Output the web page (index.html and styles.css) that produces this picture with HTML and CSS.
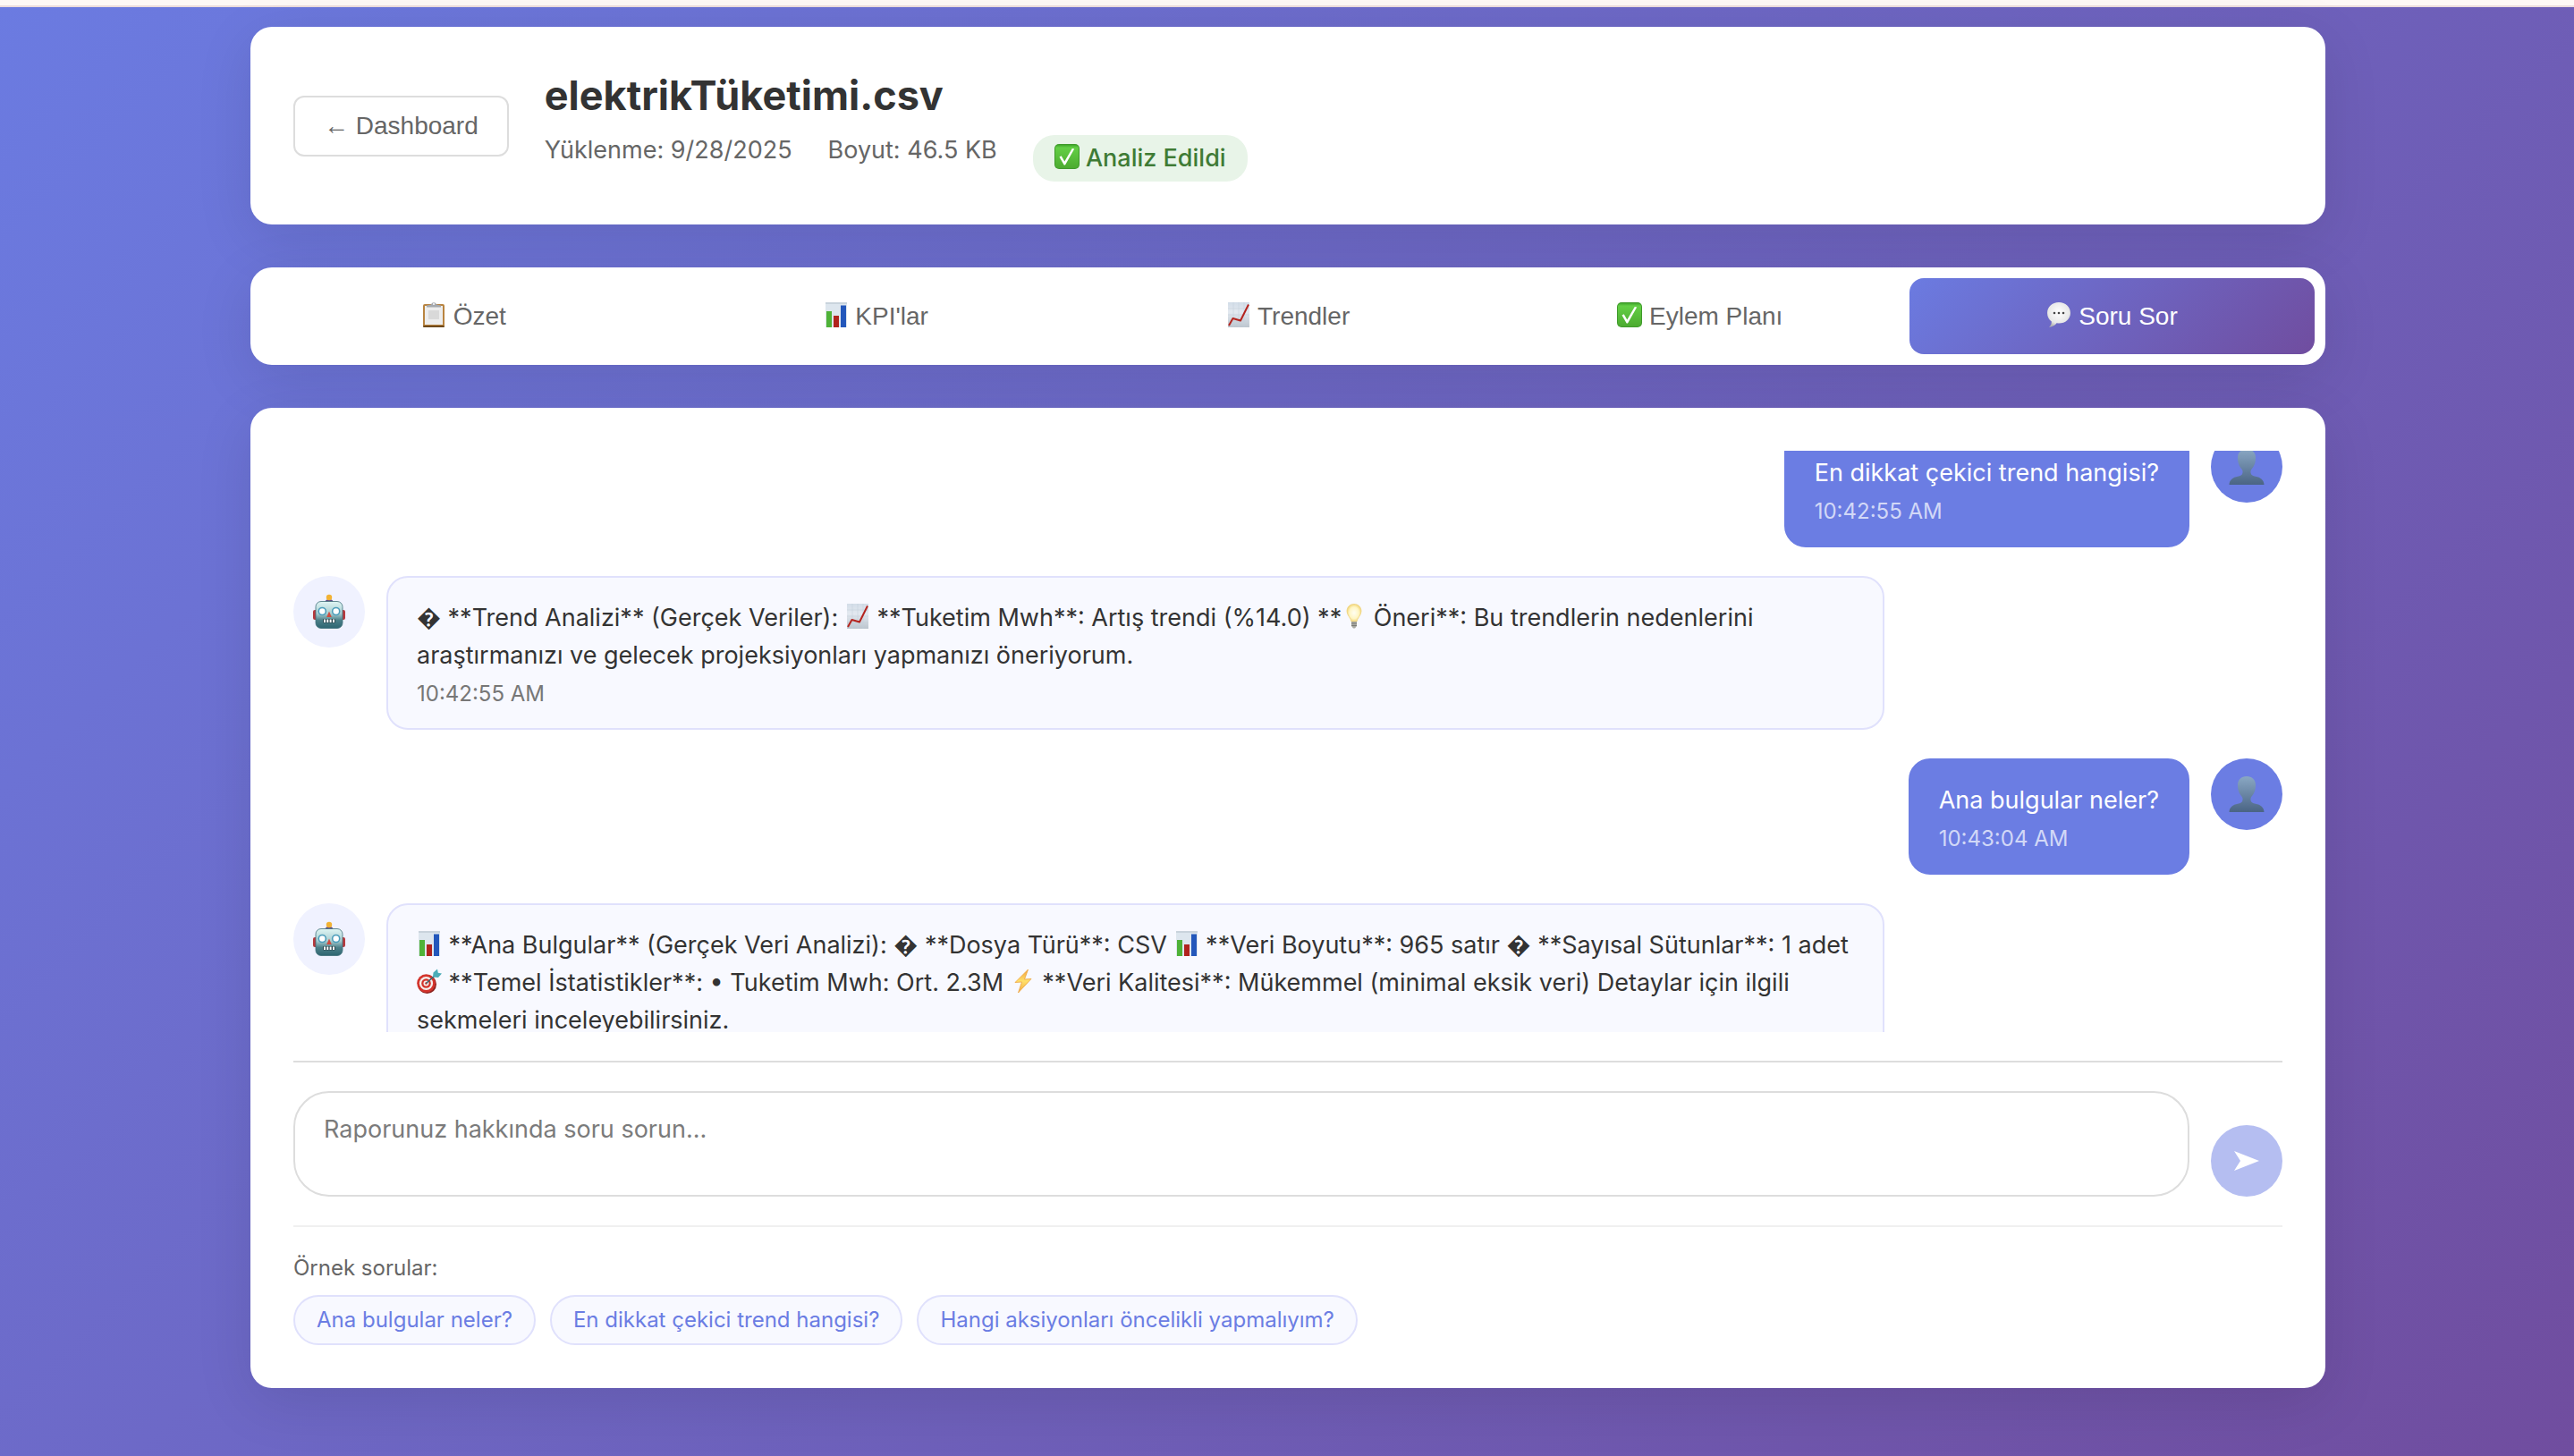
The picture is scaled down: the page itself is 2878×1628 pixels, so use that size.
FILE: index.html
```html
<!DOCTYPE html>
<html lang="tr">
<head>
<meta charset="utf-8">
<title>elektrikTüketimi.csv</title>
<link rel="stylesheet" href="styles.css">
</head>
<body>
<svg class="sprite" aria-hidden="true">
  <defs>
    <linearGradient id="g-green" x1="0" y1="0" x2="0" y2="1"><stop offset="0" stop-color="#3fa62b"/><stop offset=".12" stop-color="#63cf45"/><stop offset="1" stop-color="#4cab30"/></linearGradient>
    <linearGradient id="g-paper" x1="0" y1="0" x2="0" y2="1"><stop offset="0" stop-color="#d3dde8"/><stop offset=".4" stop-color="#e3e9f0"/><stop offset="1" stop-color="#bcc5ce"/></linearGradient>
    <linearGradient id="g-person" x1="0" y1="0" x2="0" y2="1"><stop offset="0" stop-color="#8aa8c4"/><stop offset="1" stop-color="#4a6484"/></linearGradient>
    <linearGradient id="g-robot" x1="0" y1="0" x2="0" y2="1"><stop offset="0" stop-color="#dff5f4"/><stop offset=".45" stop-color="#a9cfd2"/><stop offset=".7" stop-color="#4c8089"/><stop offset="1" stop-color="#2d6570"/></linearGradient>
    <linearGradient id="g-bolt" x1="0" y1="0" x2="0" y2="1"><stop offset="0" stop-color="#f0a13a"/><stop offset=".5" stop-color="#ffe16b"/><stop offset="1" stop-color="#f2a640"/></linearGradient>
    <radialGradient id="g-bubble" cx=".5" cy=".4" r=".6"><stop offset="0" stop-color="#fff"/><stop offset=".75" stop-color="#e8e8e8"/><stop offset="1" stop-color="#b5b5b5"/></radialGradient>
    <radialGradient id="g-bulb" cx=".5" cy=".5" r=".55"><stop offset="0" stop-color="#fffef2"/><stop offset=".6" stop-color="#fff6c4"/><stop offset="1" stop-color="#f0cf68"/></radialGradient>
  </defs>
  <symbol id="i-check" viewBox="0 0 28 28">
    <rect width="28" height="28" rx="5" fill="#3f9a2b"/><rect x="1" y="1" width="26" height="26" rx="4" fill="url(#g-green)"/>
    <path d="M5.500 14.500l2.200-1.200 3.600 6.200L19.800 5l2.400.4L12 23.500h-1.300z" fill="#fff"/>
  </symbol>
  <symbol id="i-trend" viewBox="0 0 28 28">
    <rect x="2" width="24" height="28" fill="url(#g-paper)"/><path d="M2 7h24M2 14h24M2 21h24M8 0v28M14 0v28M20 0v28" stroke="#c3ced9" stroke-width=".5"/>
    <path d="M3 26l4.500-8 8.500 2.500L25 2.500" fill="none" stroke="#b5251f" stroke-width="2" stroke-linejoin="round"/>
  </symbol>
  <symbol id="i-bars" viewBox="0 0 28 28">
    <rect x="2" width="24" height="28" fill="#dde6ee"/><path d="M2 1h24" stroke="#c9d3dc" stroke-width="2"/>
    <rect x="3" y="10" width="6" height="18" fill="#4fb238"/><rect x="11" y="15" width="6" height="13" fill="#b0231e"/><rect x="19" y="3.500" width="6" height="24.500" fill="#2357bb"/>
  </symbol>
  <symbol id="i-clip" viewBox="0 0 28 28">
    <rect x="2" y="2" width="24" height="26" rx="2" fill="#b98440"/><rect x="2" y="26" width="24" height="2" rx="1" fill="#6f4a1c"/>
    <rect x="4" y="4" width="20" height="21" fill="#ededed"/><path d="M8 10h12M8 12h12M8 14h12M8 16h12M8 18h12" stroke="#c5c5c5" stroke-width="1"/>
    <path d="M6 5.500V3.500l5-1q.5-2.200 3-2.200t3 2.200l5 1v2z" fill="#a4a8ae"/><circle cx="14" cy="2" r="1" fill="#fff"/>
  </symbol>
  <symbol id="i-talk" viewBox="0 0 28 28">
    <path d="M14 0C6.500 0 1 5 1 12c0 4 1.900 7.500 4.800 9.400.2 2.500-.8 4.600-2.800 6.400 4-.4 6.900-2 8.500-4.500l2.500.2c7.500 0 13-4.800 13-11.500S21.500 0 14 0z" fill="url(#g-bubble)"/>
    <circle cx="9" cy="12" r="1.300" fill="#444"/><circle cx="14" cy="12" r="1.300" fill="#444"/><circle cx="19" cy="12" r="1.300" fill="#444"/>
  </symbol>
  <symbol id="i-bulb" viewBox="0 0 28 28">
    <path d="M14 .5c-4.800 0-8 3.500-8 8 0 4.500 4.500 7.500 5 11.500h6c.5-4 5-7 5-11.500 0-4.500-3.200-8-8-8z" fill="url(#g-bulb)" stroke="#edd27e" stroke-width=".8"/>
    <path d="M11 20h6v5l-2 2.500h-2L11 25z" fill="#a9a9a2"/><path d="M11 22h6M11 24.500h6" stroke="#6f6f6a" stroke-width=".8"/>
  </symbol>
  <symbol id="i-bolt" viewBox="0 0 28 28">
    <path d="M19.500 1L5 15.500l7.500-.5L8.500 27 23 11.500l-7.500.5z" fill="url(#g-bolt)" stroke="#eda33f" stroke-width=".8"/>
  </symbol>
  <symbol id="i-target" viewBox="0 0 28 28">
    <circle cx="11.500" cy="17.500" r="10.500" fill="#8d2320"/><circle cx="10.500" cy="16.500" r="10.300" fill="#d3342c"/><circle cx="10.500" cy="16.500" r="7.600" fill="#f4efec"/><circle cx="10.500" cy="16.500" r="5.300" fill="#d3342c"/><circle cx="10.500" cy="16.500" r="3" fill="#f4efec"/><circle cx="10.500" cy="16.500" r="1.300" fill="#d3342c"/>
    <path d="M10.500 16.500L20 8" stroke="#3c6570" stroke-width="1.600"/><path d="M18 9.500l.5-5L23 .5l.8 4.200 4.200.8-4 4.500z" fill="#4badb8"/>
  </symbol>
  <symbol id="i-person" viewBox="0 0 40 40">
    <path d="M20 0c-6 0-10 4-10 9.500 0 2.200.1 4.200.8 6.500.8 3 2.500 5 4 7 .8 1.200.9 2.500.6 4-.4 2.200-2.400 3.200-5.400 3.800C4.500 31.800.8 34.500.5 40h39c-.3-5.500-4-8.200-9.500-9.200-3-.6-5-1.600-5.400-3.800-.3-1.500-.2-2.800.6-4 1.500-2 3.200-4 4-7 .7-2.300.8-4.300.8-6.500C30 4 26 0 20 0z" fill="url(#g-person)"/>
  </symbol>
  <symbol id="i-robot" viewBox="0 0 40 40">
    <path d="M15.500 9.500q0-3.500 4.500-3.500t4.500 3.500z" fill="#5d4a86"/><circle cx="20" cy="4" r="3.200" fill="#f2b233"/>
    <rect x="2" y="18" width="5" height="11" rx="2" fill="#b7383c"/><rect x="33" y="18" width="5" height="11" rx="2" fill="#b7383c"/>
    <rect x="5" y="8.500" width="30" height="30" rx="6" fill="url(#g-robot)" stroke="#3f6f78" stroke-width=".8"/>
    <circle cx="12.300" cy="19.500" r="4.800" fill="#4b9dbb"/><circle cx="12.300" cy="19.500" r="3.200" fill="#fff"/><circle cx="27.700" cy="19.500" r="4.800" fill="#4b9dbb"/><circle cx="27.700" cy="19.500" r="3.200" fill="#fff"/>
    <path d="M20 19.500l2.800 6.500h-5.600z" fill="#d04b3f"/><rect x="13" y="28" width="14" height="4.500" rx="1" fill="#28474e"/><path d="M15 28.600v3.400M18.300 28.600v3.400M21.600 28.600v3.400M25 28.600v3.400" stroke="#fff" stroke-width="2"/>
  </symbol>
</svg>
<div class="topline"></div>
<main class="container">
  <header class="card header">
    <button class="back" type="button">← Dashboard</button>
    <div>
      <h1 class="title">elektrikTüketimi.csv</h1>
      <div class="meta">
        <span>Yüklenme: 9/28/2025</span>
        <span>Boyut: 46.5 KB</span>
        <span class="badge"><svg class="emoji"><use href="#i-check"/></svg> Analiz Edildi</span>
      </div>
    </div>
  </header>

  <nav class="card tabs">
    <button class="tab" type="button"><svg class="emoji"><use href="#i-clip"/></svg> Özet</button>
    <button class="tab" type="button"><svg class="emoji"><use href="#i-bars"/></svg> KPI'lar</button>
    <button class="tab" type="button"><svg class="emoji"><use href="#i-trend"/></svg> Trendler</button>
    <button class="tab" type="button"><svg class="emoji"><use href="#i-check"/></svg> Eylem Planı</button>
    <button class="tab active" type="button"><svg class="emoji"><use href="#i-talk"/></svg> Soru Sor</button>
  </nav>

  <section class="card chat">
    <div class="messages">
      <article class="message user">
        <div class="avatar"><svg><use href="#i-person"/></svg></div>
        <div class="bubble"><p>En dikkat çekici trend hangisi?</p><time>10:42:55 AM</time></div>
      </article>
      <article class="message">
        <div class="avatar"><svg><use href="#i-robot"/></svg></div>
        <div class="bubble"><p>� **Trend Analizi** (Gerçek Veriler): <svg class="emoji"><use href="#i-trend"/></svg> **Tuketim Mwh**: Artış trendi (%14.0) **<svg class="emoji"><use href="#i-bulb"/></svg> Öneri**: Bu trendlerin nedenlerini araştırmanızı ve gelecek projeksiyonları yapmanızı öneriyorum.</p><time>10:42:55 AM</time></div>
      </article>
      <article class="message user">
        <div class="avatar"><svg><use href="#i-person"/></svg></div>
        <div class="bubble"><p>Ana bulgular neler?</p><time>10:43:04 AM</time></div>
      </article>
      <article class="message">
        <div class="avatar"><svg><use href="#i-robot"/></svg></div>
        <div class="bubble"><p><svg class="emoji"><use href="#i-bars"/></svg> **Ana Bulgular** (Gerçek Veri Analizi): � **Dosya Türü**: CSV <svg class="emoji"><use href="#i-bars"/></svg> **Veri Boyutu**: 965 satır � **Sayısal Sütunlar**: 1 adet <svg class="emoji"><use href="#i-target"/></svg> **Temel İstatistikler**: • Tuketim Mwh: Ort. 2.3M <svg class="emoji"><use href="#i-bolt"/></svg> **Veri Kalitesi**: Mükemmel (minimal eksik veri) Detaylar için ilgili sekmeleri inceleyebilirsiniz.</p></div>
      </article>
    </div>
    <form class="composer">
      <textarea class="question" rows="2" aria-label="Soru" placeholder="Raporunuz hakkında soru sorun..."></textarea>
      <button class="send" type="button" aria-label="Gönder"><svg viewBox="0 0 28 22"><path d="M0 0l28 11L0 22l7-11z" fill="#fff"/></svg></button>
    </form>
    <div class="samples">
      <p class="samples-label">Örnek sorular:</p>
      <div class="chips">
        <button class="chip" type="button">Ana bulgular neler?</button>
        <button class="chip" type="button">En dikkat çekici trend hangisi?</button>
        <button class="chip" type="button">Hangi aksiyonları öncelikli yapmalıyım?</button>
      </div>
    </div>
  </section>
</main>
</body>
</html>
```
FILE: styles.css
```css
* { box-sizing: border-box; margin: 0; padding: 0; }
body {
  min-height: 100vh;
  font: 27px/34px Inter, "Noto Sans", sans-serif;
  color: #333;
  background: linear-gradient(135deg, #6b7be1 0%, #704d9f 100%);
}
button, textarea { font: inherit; border: 0; background: none; }
.sprite { position: absolute; width: 0; height: 0; }
.topline { height: 8px; background: #fef8f5; border-bottom: 2px solid #ecdcdc; }
.container { max-width: 2400px; margin: 0 auto; padding: 22px 39px 76px 41px; display: flex; flex-direction: column; gap: 48px; }
.card { background: #fff; border-radius: 24px; box-shadow: 0 16px 64px rgba(0, 0, 0, .1); }
.emoji { width: 28px; height: 28px; vertical-align: -3px; }

.header { display: flex; align-items: center; gap: 40px; padding: 48px; }
.back, .tab { font-family: "Liberation Sans", Arial, sans-serif; font-size: 28px; color: #666; }
.back { padding: 16px 32px; line-height: 32px; border: 2px solid #ddd; border-radius: 12px; }
.title { font-size: 45px; line-height: 57px; margin-bottom: 16px; font-weight: 700; }
.meta { display: flex; align-items: flex-start; gap: 40px; color: #666; }
.badge { padding: 8px 24px; line-height: 36px; border-radius: 24px; background: #e8f4e8; color: #3f7b35; font-weight: 500; }

.tabs { display: flex; gap: 8px; padding: 12px; }
.tab { flex: 1; padding: 26px 16px; line-height: 33px; border-radius: 16px; }
.tab.active { color: #fff; background: linear-gradient(135deg, #6b7be1 0%, #704d9f 100%); }

.chat { padding: 48px; }
.messages { height: 650px; overflow: hidden; display: flex; flex-direction: column; justify-content: flex-start; gap: 32px; }
.messages > :first-child { margin-top: -22px; }
.message { display: flex; flex: none; align-items: flex-start; gap: 24px; max-width: 80%; }
.message.user { flex-direction: row-reverse; align-self: flex-end; }
.avatar { flex: none; display: grid; place-items: center; width: 80px; height: 80px; border-radius: 50%; background: #f0f2ff; }
.avatar svg { width: 40px; height: 40px; }
.bubble { padding: 24px 32px; border: 2px solid #e0e1fc; border-radius: 24px; background: #f8f9ff; line-height: 42px; }
.bubble time { display: block; margin-top: 8px; font-size: 24px; line-height: 28px; color: #777; }
.user .avatar, .user .bubble { background: #6b7de3; border-color: #6b7de3; color: #fff; }
.user time { color: #d2d8f7; }

.composer { display: flex; align-items: flex-end; gap: 24px; margin-top: 32px; padding: 32px 0; border-top: 2px solid #ddd; border-bottom: 2px solid #f0f0f0; }
.question { flex: 1; display: block; padding: 24px 32px; line-height: 33px; border: 2px solid #ddd; border-radius: 40px; resize: none; background: #fff; }
.question::placeholder { color: #7b7b7b; }
.send { flex: none; display: grid; place-items: center; width: 80px; height: 80px; border-radius: 50%; background: #b5bef1; }
.send svg { width: 28px; height: 22px; }
.samples { padding-top: 32px; font-size: 24px; line-height: 28px; }
.samples-label { color: #666; margin-bottom: 16px; }
.chips { display: flex; gap: 16px; }
.chip { padding: 12px 24px; border: 2px solid #e0e1fc; border-radius: 30px; background: #f8f9ff; color: #6b7de3; }
```
